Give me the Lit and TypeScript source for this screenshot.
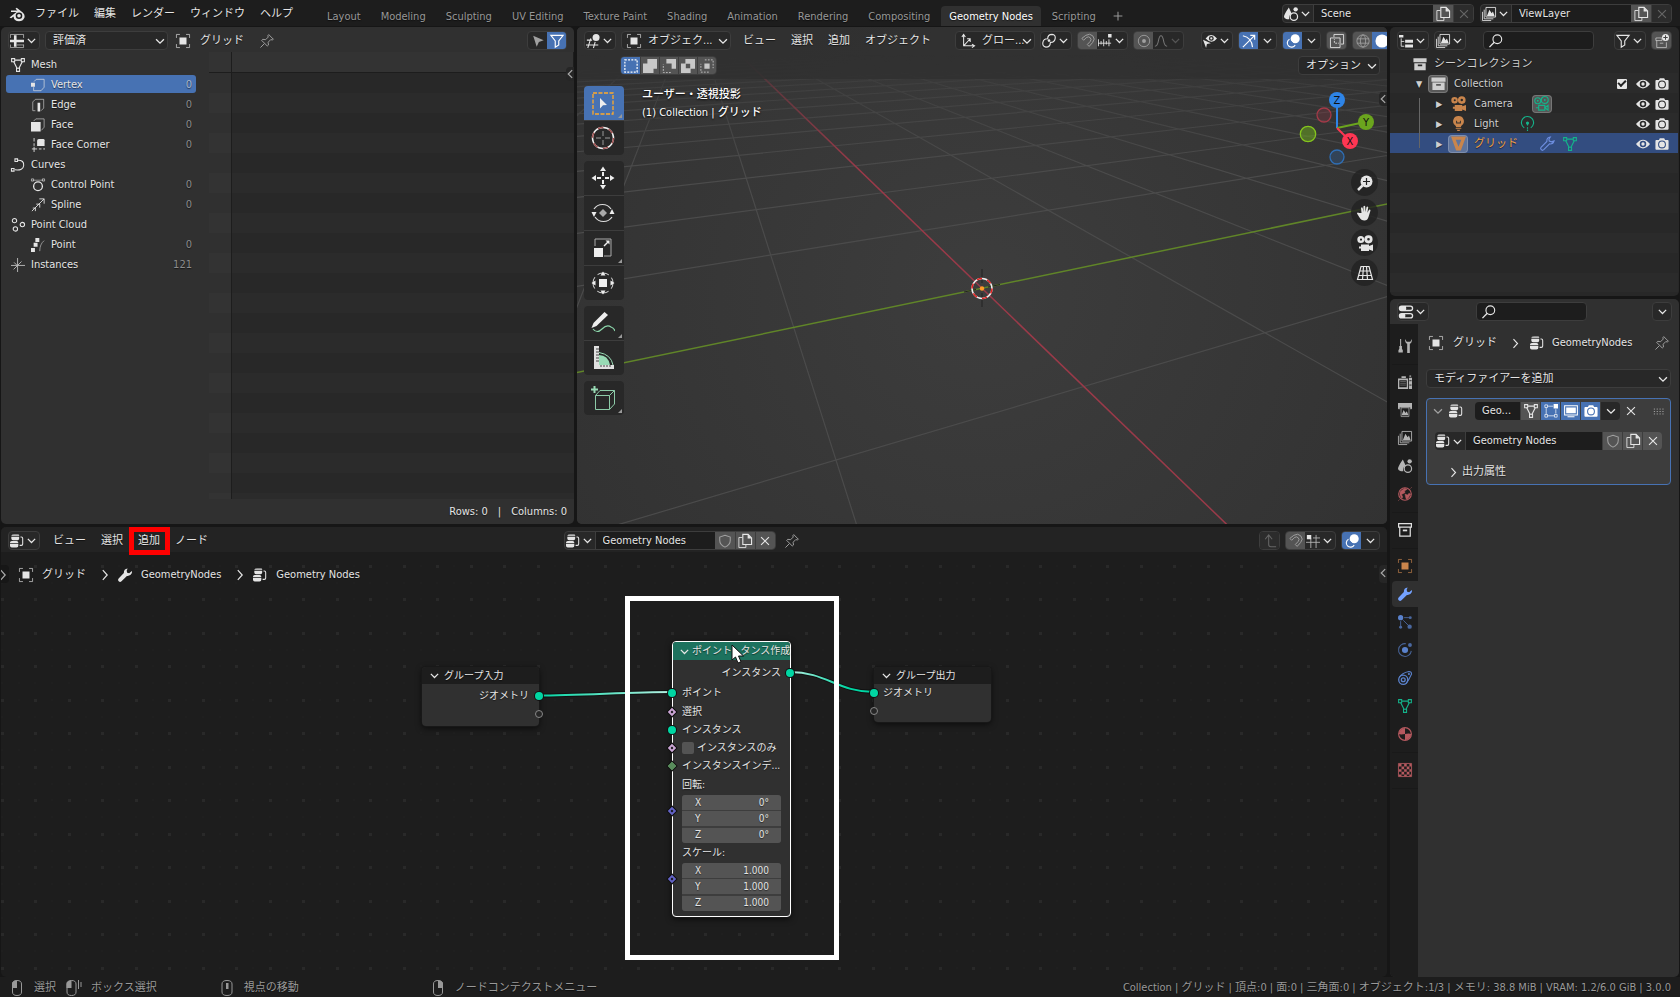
import { LitElement, html, svg, css, nothing, TemplateResult, SVGTemplateResult } from "lit";
import { customElement } from "lit/decorators.js";
import { classMap } from "lit/directives/class-map.js";

const shield = svg`<path d="M8 1.500l6 2v4c0 3.500-2.500 6-6 7.500c-3.500-1.500-6-4-6-7.500v-4z" fill="none" stroke="currentColor" stroke-width="1.200"/>`;
const nodes = svg`<path d="M4.500.500h5q1 0 1 1v.5h-9a3 1.500 0 0 1 3-1.500z M1.500 3h9v2q0 2-2 2h-5q-2 0-2-2z M0 10q0-2 2-2h5.500q2 0 2 2v.5h-9.500z M0 11.500h9.500v2q0 2-2 2h-5.500q-2 0-2-2z" fill="currentColor"/><path d="M12 3.500h1q1.500 0 1.500 1.500v6.500q0 1.500-1.500 1.500h-2" fill="none" stroke="currentColor" stroke-width="1.200"/>`;
const images = svg`<path d="M2.500 3v10.500h10.500M.5 5.500v10h10" fill="none" stroke="currentColor"/><path d="M4.500.5h11v11h-11z" fill="none" stroke="currentColor"/><path d="M5.500 10.500l3-7.500 2.500 4 1.500-2 2 5.500z" fill="currentColor"/>`;
const photo = svg`<path fill-rule="evenodd" d="M1.500 3.500h3l1-2h5l1 2h3q1 0 1 1v9q0 1-1 1h-13q-1 0-1-1v-9q0-1 1-1zM8 4a4.500 4.500 0 1 0 0 9a4.500 4.500 0 1 0 0-9zM8 5.200a3.300 3.300 0 1 1 0 6.600a3.300 3.300 0 1 1 0-6.600z" fill="currentColor"/><circle cx="8" cy="8.500" r="2" fill="none" stroke="currentColor"/>`;
const objectBox = svg`<path d="M.5 4.500v-4h4M11.500.5h4v4M15.500 11.500v4h-4M4.500 15.500h-4v-4" fill="none" stroke="currentColor" opacity=".75"/><path d="M4 4h8v8h-8z" fill="currentColor"/>`;
const meshTri = svg`<path d="M3 4l4 8M13 4l-4 8M4.500 2.500h7" fill="none" stroke="currentColor" stroke-width="1.300"/><path d="M.700.700h3.500v3.500h-3.500zM11.800.700h3.500v3.500h-3.500zM6.300 11.800h3.500v3.500h-3.500z" fill="none" stroke="currentColor" stroke-width="1.200"/>`;
const movie = svg`<path fill-rule="evenodd" d="M3.800 1a3.500 3.500 0 1 1 0 7a3.500 3.500 0 1 1 0-7zM4 3.500a1.100 1.100 0 1 0 0 2.200a1.100 1.100 0 1 0 0-2.200zM11.500.2a4.100 4.100 0 1 1 0 8.200a4.100 4.100 0 1 1 0-8.200zM11.500 3a1.300 1.300 0 1 0 0 2.600a1.300 1.300 0 1 0 0-2.600zM4 9.500h8v1.500l4-1.500v6.500l-4-1.500v1.500h-8v-2.500h-2v-2h2z" fill="currentColor"/>`;
const movieLine = svg`<g fill="none" stroke="currentColor" stroke-width="1.200"><circle cx="4" cy="5" r="3.200"/><circle cx="11.500" cy="4.200" r="3.700"/><path d="M5 10h6.500v5h-6.500zM2 12.500h3M11.500 12.500l3.500-2.500v5z"/></g><circle cx="4" cy="5" r="1" fill="currentColor"/><circle cx="11.500" cy="4.200" r="1" fill="currentColor"/>`;
const wrench = svg`<path d="M11 .500q-4.500.3-4.300 5.200l-6 6.300q-1.500 1.700.1 3.200t3.200 0l6.200-6.200q4 .5 5.500-3q.6-1.500.1-2.700l-3 2.700-2.300-.5-.6-2.500z" fill="currentColor"/>`;
const sceneIcon = svg`<path d="M5.500.500q-5.500 8-5.500 10.500a5 3.500 0 0 0 6 3q-1-5 3-6z" fill="currentColor"/><circle cx="13.300" cy="2.700" r="2.500" fill="currentColor"/><circle cx="11.300" cy="11" r="4.200" fill="none" stroke="currentColor" stroke-width="1.400"/>`;
const archive = svg`<path d="M.5 1.500h15v4.500h-15z" fill="currentColor"/><path fill-rule="evenodd" d="M1.500 7h13v8h-13zM5.500 8.500v2h5v-2z" fill="currentColor"/>`;

const ICONS: Record<string, SVGTemplateResult> = {
  nodes, images, photo, objectBox, meshTri, movie, movieLine, wrench, shield, archive, scene: sceneIcon,
  blender: svg`<path d="M.5 11.500l7-5.500h-5.500v-1.500h6.500l-2-1.700 1.200-1 6 4.700q2.600 2.300 1.700 5.300q-1.500 3.500-5.400 3.500q-5 0-5.500-4.800l-2.300 1.800z" fill="currentColor"/><circle cx="10" cy="9.800" r="3.300" fill="#1d1d1d"/><circle cx="10" cy="9.800" r="1.800" fill="currentColor"/>`,
  chevron: svg`<path d="M3.500 6l4.500 4.500 4.500-4.500" fill="none" stroke="currentColor" stroke-width="1.500"/>`,
  right: svg`<path d="M5.500 2.500l5 5.500-5 5.500" fill="none" stroke="currentColor" stroke-width="1.400"/>`,
  left: svg`<path d="M10.500 3.500l-4.500 4.500 4.500 4.500" fill="none" stroke="currentColor" stroke-width="1.400"/>`,
  close: svg`<path d="M3.500 3.500l9 9M12.500 3.500l-9 9" stroke="currentColor" stroke-width="1.300"/>`,
  plus: svg`<path d="M8 3v10M3 8h10" stroke="currentColor" stroke-width="1.200"/>`,
  copy: svg`<path d="M5 4h-4v11.500h8v-3" fill="none" stroke="currentColor"/><path d="M5.500 12v-11.500h6l4 4v7.500z" fill="none" stroke="currentColor" stroke-width="1.300"/><path d="M11 0v5h5z" fill="currentColor"/>`,
  sheet: svg`<path d="M.5 4.500v-4h15v4M.5 12v3.500h15v-3.500M8 12.500h7.500" fill="none" stroke="currentColor" opacity=".7"/><path d="M0 6.500h16v3h-16zM4.500 1.500h3v13h-3z" fill="currentColor"/>`,
  pin: svg`<path d="M10 .700l5.300 5.300-1.300.800-1.700-.4-3 3 .4 3.200-1.300 1.200-6.500-6.500 1.300-1.200 3.200.4 3-3-.4-1.600zM5 11l-4.500 4.500" fill="none" stroke="currentColor" stroke-width="1.100"/>`,
  cursor: svg`<path d="M2.500 2l12 5-5.500 2-2.500 5.500z" fill="currentColor"/>`,
  filter: svg`<path d="M1 1.500h14l-5 6.500v4.500l-4 2.500v-7z" fill="none" stroke="currentColor" stroke-width="1.300"/>`,
  vertex: svg`<path d="M3.500 4l2.500-2.500h9v9l-3.500 4h-8.500v-4" fill="none" stroke="currentColor" opacity=".75"/><path d="M0 5.500h4.500v4.500h-4.500z" fill="currentColor"/>`,
  edge: svg`<path d="M5 14.500h-3v-10l3-3h9.500v10l-3 3" fill="none" stroke="currentColor" opacity=".65"/><path d="M7.500 5.500h3v10h-3z" fill="currentColor"/>`,
  face: svg`<path d="M3 3.500l2.500-2.500h9.500v9.500l-3 3.500" fill="none" stroke="currentColor" opacity=".65"/><path d="M0 4.500h11v11h-11z" fill="currentColor"/>`,
  corner: svg`<path d="M3.500 0v4M3.500 6v3M1 12.500h6M3.500 10v6M9 12.500h3M14 12.500h2" fill="none" stroke="currentColor"/><path d="M7 9v-6q0-2 2-2h5q1.500 0 1.500 1.500v6.500z" fill="currentColor"/>`,
  curve: svg`<path d="M8 2.500q7 0 6.500 6t-10 5" fill="none" stroke="currentColor" stroke-width="1.200"/><path d="M4.500 1h3v3h-3zM.5 12h3v3h-3z" fill="none" stroke="currentColor" stroke-width="1.200"/>`,
  control: svg`<path d="M2 2.500h12" stroke="currentColor" opacity=".6"/><path d="M.5 1h2.500v2.500h-2.500zM13 1h2.500v2.500h-2.500z" fill="none" stroke="currentColor" opacity=".7"/><circle cx="8" cy="9.500" r="5" fill="none" stroke="currentColor" stroke-width="1.500"/>`,
  spline: svg`<path d="M1 15l14-14M9.500 1h5.500v5.500M2 11.500h3v3.500M6 7h4v4" fill="none" stroke="currentColor"/>`,
  cloud: svg`<g fill="none" stroke="currentColor" stroke-width="1.200"><circle cx="4" cy="3" r="2.500"/><circle cx="13" cy="7.500" r="2.500"/><circle cx="5" cy="12.500" r="2.500"/></g>`,
  point: svg`<path d="M5 0h4.500v4.500h-4.500zM3 5.500h4.500v4.500h-4.500zM0 11.500h4.500v4.500h-4.500z" fill="currentColor"/><path d="M15 3q-5 4-5 12" fill="none" stroke="currentColor" opacity=".6"/>`,
  instances: svg`<path d="M7.500 0v16M0 8.500h16M3 13l9-9M3.500 5l3 3" stroke="currentColor" opacity=".8"/>`,
  view3d: svg`<path d="M1 7h6M0 12.500h14M5.500 5l-3.500 11M10.500 9l-2 7" stroke="currentColor" fill="none" stroke-width="1.200"/><circle cx="11.500" cy="4" r="4" fill="currentColor"/>`,
  axes: svg`<path d="M3 1v12.500h12M1 3.500l2-3 2 3M12.500 11.500l3 2-3 2M3 13.500l7-7.500M7 5.500h3.500v3.500" fill="none" stroke="currentColor" stroke-width="1.200"/>`,
  pivot: svg`<path d="M7 5.500q-5-.5-6 4t3.500 5.500q5 0 5-5M9 9.500q5 .5 6-4t-3.500-5q-5 0-5 5" fill="none" stroke="currentColor" stroke-width="1.300"/><circle cx="8" cy="7.500" r="1.500" fill="currentColor"/>`,
  magnet: svg`<path d="M1 5l2 2.200 3-3q2.500-2 4.500 0t0 4.300l-3.300 3.500 2.100 2.200 4-4.500q3.500-4 .2-7.500t-8-.7z" fill="none" stroke="currentColor" stroke-width="1.100"/>`,
  increment: svg`<path d="M.5 6v8M3.500 8v4M6.500 6v8M9.500 8v4M12.500 6v8M0 10.500h15" stroke="currentColor"/><path d="M11.500 0h4v4h-4z" fill="currentColor"/>`,
  propEdit: svg`<circle cx="8" cy="8" r="6.500" fill="none" stroke="currentColor"/><circle cx="8" cy="8" r="2.200" fill="currentColor"/>`,
  falloff: svg`<path d="M1 14q3 0 4-6t3-6 3 6 4 6" fill="none" stroke="currentColor" stroke-width="1.200"/>`,
  seeSelect: svg`<path fill-rule="evenodd" d="M3 5q6-7.500 13 0q-6 7.500-13 0zM9.500 2.200a2.800 2.800 0 1 0 0 5.600a2.800 2.800 0 1 0 0-5.600z" fill="currentColor"/><path d="M0 6.500l9 4-4.500 1-1 4.500z" fill="currentColor"/><circle cx="9.500" cy="5" r="1.300" fill="currentColor"/>`,
  gizmo: svg`<path d="M1 2q10 2 11 13M1 15l13.500-13.500M9.500 1.500h5v5" fill="none" stroke="currentColor" stroke-width="1.300"/>`,
  overlays: svg`<circle cx="10.500" cy="5.500" r="5.200" fill="currentColor"/><path d="M4 6a4.800 4.800 0 1 0 6.500 6.500" fill="none" stroke="currentColor" stroke-width="1.300"/><path d="M5.500 8l3 3" stroke="#4772b3"/>`,
  xray: svg`<path d="M4.500 3.500v-3h11v11h-3M.5 4.500h11v11h-11z" fill="none" stroke="currentColor"/><path d="M5 10v-4M6 10.500h4" fill="none" stroke="currentColor" stroke-dasharray="2 1"/>`,
  wireGlobe: svg`<circle cx="8" cy="8" r="7" fill="none" stroke="currentColor"/><ellipse cx="8" cy="8" rx="3" ry="7" fill="none" stroke="currentColor"/><path d="M1 5.500h14M1 10.500h14" stroke="currentColor"/>`,
  solid: svg`<circle cx="8" cy="8" r="7.500" fill="currentColor"/>`,
  outliner: svg`<path d="M0 1h5v3h-5zM7 6.500h9v3.500h-9zM7 12h9v3.500h-9z" fill="currentColor"/><path d="M2.500 5v9h3.500M2.500 8.500h3.500" fill="none" stroke="currentColor"/>`,
  search: svg`<circle cx="9.500" cy="6" r="5" fill="none" stroke="currentColor" stroke-width="1.300"/><path d="M6 9.500l-5.500 5.500" stroke="currentColor" stroke-width="1.600"/>`,
  newColl: svg`<path d="M1 4.500h7v3h-7zM2 7.500v8h11v-6M5.500 10.500h4" fill="none" stroke="currentColor" opacity=".7"/><circle cx="12" cy="4" r="4" fill="currentColor"/><path d="M12 1.500v5M9.500 4h5" stroke="#444" stroke-width="1.200"/>`,
  bulb: svg`<path fill-rule="evenodd" d="M8 0a5.500 5.500 0 0 1 4 9.500q-1.500 1-1.500 2.500h-5q0-1.500-1.500-2.500a5.500 5.500 0 0 1 4-9.500zM5.500 5h1v2h3v-2h1v3h-5zM5 12.700h6v1h-6zM6 14.700h4l-1 1.300h-2z" fill="currentColor"/>`,
  lightData: svg`<path d="M4.500 12.500a6.500 6.500 0 1 1 7 0M8 8v2M8 12v1.500M8 14.500v1.500" fill="none" stroke="currentColor" stroke-width="1.200"/><circle cx="8" cy="7.500" r="1.700" fill="currentColor"/>`,
  meshSolid: svg`<path fill-rule="evenodd" d="M0 .5h16l-5.500 15h-5zM5 4l3 7.500 3-7.500z" fill="currentColor"/>`,
  wrenchLine: svg`<path d="M11 1q-4 .3-3.700 4.800l-6.200 6.200q-1 1.300.2 2.600t2.700 0l6.200-6.200q3.800.6 4.800-3.200l-2.800 1-2.300-.7-.4-2.200z" fill="none" stroke="currentColor" stroke-width="1.200"/>`,
  eye: svg`<path fill-rule="evenodd" d="M0 8q8-10 16 0q-8 10-16 0zM8 4.300a3.700 3.700 0 1 0 0 7.400a3.700 3.700 0 1 0 0-7.400z" fill="currentColor"/><circle cx="8" cy="8" r="1.900" fill="currentColor"/>`,
  propsEditor: svg`<path fill-rule="evenodd" d="M3 .5h10a3 3 0 0 1 0 6.500h-10a3 3 0 0 1 0-6.500zM8 2a5 5 0 0 1 0 3.500h5a1.500 1.500 0 0 0 0-3.500zM3 9h10a3 3 0 0 1 0 6.500h-10a3 3 0 0 1 0-6.500zM7 10.500a5 5 0 0 1 0 3.500h6a1.500 1.500 0 0 0 0-3.500z" fill="currentColor"/>`,
  tool: svg`<path d="M3 0v8" stroke="currentColor" stroke-width="1.200"/><path d="M1.500 8h3v3q1.500 1 1 4.500h-5q-.5-3.500 1-4.500zM8 0q0 4.500 2.500 5.500v10.500h3v-10.500q2.500-1 2.500-5.500l-2 3h-4z" fill="currentColor"/>`,
  render: svg`<path fill-rule="evenodd" d="M0 4h11.500v12h-11.500zM1.500 6v8h8.500v-8zM12.500 3h3.500v13h-3.500zM4 1.500h5v2h-5zM13 .5h2v1.500h-2z" fill="currentColor"/><path d="M13 6.500h2.500M13 11.500h2.500" stroke="#1d1d1d"/><path d="M2.500 7.500h6.500M2.500 9.500h6.500M2.500 11.500h6.500" stroke="currentColor" opacity=".5"/>`,
  output: svg`<path d="M0 0h16v6q0 1-1 1h-1v-2h-12v2h-1q-1 0-1-1z" fill="currentColor"/><path d="M3.500 5.500h9v10h-9z" fill="none" stroke="currentColor" opacity=".8"/><path d="M4 14l2.500-6 2 3.500 1.500-2 2 4.500z" fill="currentColor"/>`,
  world: svg`<circle cx="8" cy="8" r="7.200" fill="none" stroke="currentColor" stroke-width="1.300"/><path d="M2.500 5l5-3.500 3 1-3 2 .5 2-4 2 1.500 3-1 1.500q-3-3-2-8zM8 8l3 1 1.500-2 2 1-3 5-2 1-1-3zM0 16l2-2M14 2l2-2" fill="currentColor" stroke="currentColor" stroke-width=".5"/>`,
  archiveLine: svg`<path d="M.7.700h14.600v3.900h-14.600zM2 5.500v9.500h12v-9.500" fill="none" stroke="currentColor" stroke-width="1.400"/><path d="M5.500 7.500h5v2h-5z" fill="currentColor"/>`,
  particles: svg`<circle cx="3" cy="3" r="3" fill="currentColor"/><g opacity=".75"><circle cx="14" cy="3" r="1.700" fill="currentColor"/><circle cx="3" cy="14" r="1.700" fill="currentColor"/><circle cx="13.300" cy="13.300" r="2.500" fill="currentColor"/><path d="M7 3h7M3 7v7M6 6l6 6" stroke="currentColor"/></g>`,
  physics: svg`<path d="M9 .800a7.300 7.300 0 1 0 6.200 8.200" fill="none" stroke="currentColor" opacity=".7" stroke-width="1.200"/><circle cx="8" cy="8" r="3.500" fill="currentColor"/><circle cx="13.700" cy="2.300" r="2.200" fill="currentColor" opacity=".75"/>`,
  constraint: svg`<path d="M1.500 7.500q3-5.500 11-7q3 0 3 3q-3 7-6.500 11" fill="none" stroke="currentColor" stroke-width="1.200"/><circle cx="6" cy="10" r="5.200" fill="none" stroke="currentColor" stroke-width="1.500"/><circle cx="6" cy="10" r="2.200" fill="none" stroke="currentColor" stroke-width="1.500"/><circle cx="12.500" cy="3.500" r="1.200" fill="currentColor"/>`,
  material: svg`<circle cx="8" cy="8" r="7.300" fill="none" stroke="currentColor" stroke-width="1.300"/><path d="M8 1v7q-5 1-7 0a7 7 0 0 1 7-7zM8 8q5-1 7 0a7 7 0 0 1-7 7z" fill="currentColor"/>`,
  texture: svg`<path d="M.5.5h15v15h-15z" fill="none" stroke="currentColor"/><path d="M1 1h3v3h-3zM7 1h3v3h-3zM13 1h2v3h-2zM4 4h3v3h-3zM10 4h3v3h-3zM1 7h3v3h-3zM7 7h3v3h-3zM13 7h2v3h-2zM4 10h3v3h-3zM10 10h3v3h-3zM1 13h3v2h-3zM7 13h3v2h-3zM13 13h2v2h-2z" fill="currentColor"/>`,
  monitor: svg`<path d="M.700 2h14.600v10.500h-14.600z" fill="none" stroke="currentColor" stroke-width="1.200"/><path d="M2.500 4h11v6.500h-11zM4 14h8v1.200h-8z" fill="currentColor"/>`,
  editMesh: svg`<path d="M2.500 4.500v7M4.500 2.500h6M13.500 6v5M4.500 13.500h7M1 1h3v3h-3zM1 12h3v3h-3zM12 12h3v3h-3z" fill="none" stroke="currentColor" opacity=".8"/><path d="M11 0h5v5h-5z" fill="currentColor"/>`,
  drag: svg`<path d="M1 5h14M1 8h14M1 11h14" stroke="currentColor" stroke-width="1.200" stroke-dasharray="1.500 2"/>`,
  up: svg`<path d="M2.500 6l4-5 4 5M6.500 1v11q0 2.500 2.500 2.500h6" fill="none" stroke="currentColor" stroke-width="1.200"/>`,
  snapGrid: svg`<path d="M5.500 5v11M11.500 1v15M0 9.500h16M8 4.500h8" stroke="currentColor" opacity=".75"/><path d="M1 1h5v5h-5z" fill="currentColor"/>`,
  mouseL: svg`<path d="M3.500 4q0-3.500 4.500-3.500t4.500 3.500v8q0 3.500-4.500 3.500t-4.500-3.500z" fill="none" stroke="currentColor"/><path d="M3 8v-4q0-3.500 5-3.500v7.500z" fill="currentColor"/>`,
  mouseDrag: svg`<path d="M1 4q0-3.500 4.500-3.500t4.500 3.500v8q0 3.500-4.500 3.500t-4.500-3.500zM12.500 0v9M15 2v5" fill="none" stroke="currentColor"/><path d="M.5 8v-4q0-3.500 5-3.500v7.500z" fill="currentColor"/>`,
  mouseM: svg`<path d="M3 4q0-3.500 5-3.500t5 3.500v8q0 3.500-5 3.500t-5-3.500z" fill="none" stroke="currentColor"/><path d="M7 3h2.500v6h-2.500z" fill="currentColor"/>`,
  mouseR: svg`<path d="M3.500 4q0-3.500 4.500-3.500t4.500 3.500v8q0 3.500-4.500 3.500t-4.500-3.500z" fill="none" stroke="currentColor"/><path d="M13 8v-4q0-3.500-5-3.500v7.500z" fill="currentColor"/>`,
  zoom: svg`<circle cx="9.500" cy="6.500" r="6" fill="currentColor"/><path d="M5.500 10.500l-4.500 4.500" stroke="currentColor" stroke-width="2.500"/><path d="M9.500 3v7M6 6.500h7" stroke="#222" stroke-width="1.200"/>`,
  hand: svg`<path d="M4.500 8l-.5-5q1-1.500 1.700 0l.8 4-.1-5.500q1-1.500 1.800 0l.3 5.500 1-5q1.200-1 1.700.3l-.8 5.500 1.600-3q1.300-.8 1.500.7l-2 6.500q-1 3.500-4 3.500q-3.500 0-5-3l-2.500-4q.5-1.500 2-.5z" fill="currentColor"/>`,
  persp: svg`<path d="M4 1.500h8l3.500 13h-15zM3 6h10M1.500 10.500h13M6.500 1.500l-1 13M9.500 1.500l1 13" fill="none" stroke="currentColor" stroke-width="1.200"/>`,
  selNew: svg`<path d="M1 1h14v14h-14z" fill="none" stroke="currentColor" stroke-width="1.400" stroke-dasharray="2.200 1.500"/>`,
  selAdd: svg`<path d="M5 0h11v11h-4v5h-12v-11h5z" fill="currentColor"/>`,
  selSub: svg`<path d="M5 0h11v11h-5v-6h-6z" fill="currentColor"/><path d="M10 15.500h-8.500v-9.500" fill="none" stroke="currentColor" stroke-dasharray="2 1.500"/>`,
  selDiff: svg`<path fill-rule="evenodd" d="M5 0h11v11h-5v5h-11v-11h5zM5.500 5.500v5h5v-5z" fill="currentColor"/>`,
  selAnd: svg`<path d="M5.500 1h9.500v9.500M10 15h-9v-9.500" fill="none" stroke="currentColor" stroke-dasharray="2 1.500"/><path d="M5 5h6v6h-6z" fill="currentColor"/>`,
};

const TOOLS: Record<string, SVGTemplateResult> = {
  select: svg`<path d="M2 2h20v21h-20z" fill="none" stroke="#ffaa2b" stroke-width="1.300" stroke-dasharray="4 1.500"/><path d="M9 7l7 7-4 .3-3 3.200z" fill="#eee"/>`,
  cursor3d: svg`<circle cx="12" cy="12" r="10.500" fill="none" stroke="#f0f0f0" stroke-width="1.500"/><circle cx="12" cy="12" r="10.500" fill="none" stroke="#a05050" stroke-width="1.500" stroke-dasharray="5.500 5.500"/><path d="M12 5v5M12 14v5M5 12h5M14 12h5" stroke="#999"/>`,
  move: svg`<path d="M12 .5l3 4.500h-6zM12 23.500l3-4.500h-6zM.5 12l4.500-3v6zM23.500 12l-4.500-3v6z" fill="#eee"/><path d="M12 6v4M12 14v4M6 12h4M14 12h4" stroke="#eee" stroke-width="2"/>`,
  rotate: svg`<path d="M3 8a10 9.500 0 0 1 17 0M21 16a10 9.500 0 0 1-17 0" fill="none" stroke="#ddd" stroke-width="1.200"/><path d="M.5 11h5l-2.500 5zM18.500 13h5l-2.500-5z" fill="#eee"/><path d="M12 8l4 4-4 4-4-4z" fill="#aaa"/>`,
  scale: svg`<path d="M4 10v-7h16v17h-7" fill="none" stroke="#aaa"/><path d="M3 12h9v9h-9z" fill="#eee"/><path d="M13 10l4-4" stroke="#eee" stroke-width="1.500"/><path d="M14.500 4.500h4v4z" fill="#eee"/>`,
  transform: svg`<circle cx="12" cy="12" r="10" fill="none" stroke="#ddd" stroke-dasharray="12 3.700" stroke-dashoffset="6"/><path d="M8 8h8v8h-8z" fill="#eee"/><path d="M12 .5l2.500 4h-5zM12 23.500l2.500-4h-5zM.5 12l4-2.500v5zM23.500 12l-4-2.500v5z" fill="#eee"/>`,
  annotate: svg`<path d="M.500 17l2-5 11-11 3.500 3-11.500 11z" fill="#eee"/><path d="M2 18q4 5 9 0t9-2q3 1 4 4" fill="none" stroke="#8cd6ab" stroke-width="1.200"/>`,
  measure: svg`<path d="M3 0h5v19h15v4h-20z" fill="#e0e0e0"/><path d="M8 9q9 0 11 10h-11z" fill="#98dbb5"/><path d="M8 6.500q12 2 14 12.500" fill="none" stroke="#98dbb5"/><path d="M5 3h3M5 6h3M5 9h3M5 12h3M5 15h3M10 19v2M13 19v2M16 19v2M19 19v2" stroke="#444"/>`,
  addCube: svg`<path d="M4.500 9.500h14v14h-14zM4.500 9.500l4.500-5h14.500v13.500l-5 5.500M18.500 9.500l5-5" fill="none" stroke="#8ccba8"/><path d="M3.500.0v7M0 3.500h7" stroke="#98dbb5" stroke-width="2"/>`,
};

const ic = (name: string, cls = "") =>
  html`<svg class="ic ${cls}" viewBox="0 0 16 16" aria-hidden="true">${ICONS[name]}</svg>`;

/* Perspective projection of floor cell (i, j) onto the view. */
const project = (i: number, j: number) => {
  const w = 1 - 0.26 * i + 0.115 * j;
  return `${((982 - 180 * i + 279.5 * j) / w).toFixed(1)} ${((288.3 - 2.3 * i - 1.5 * j) / w).toFixed(1)}`;
};
const alongI = (j: number) => `M${project(-80, j)}L${project((0.95 + 0.115 * j) / 0.26, j)}`;
const alongJ = (i: number) => `M${project(i, (0.26 * i - 0.95) / 0.115)}L${project(i, 120)}`;
const floorPath = () => {
  let d = "";
  for (let n = -14; n <= 40; n++) if (n !== 0) d += alongI(n);
  for (let n = -30; n <= 4; n++) if (n !== 0) d += alongJ(n);
  return d;
};

interface DataItem { icon: string; label: string; count?: string; child?: boolean; active?: boolean }
const DATA: DataItem[] = [
  { icon: "meshTri", label: "Mesh" },
  { icon: "vertex", label: "Vertex", count: "0", child: true, active: true },
  { icon: "edge", label: "Edge", count: "0", child: true },
  { icon: "face", label: "Face", count: "0", child: true },
  { icon: "corner", label: "Face Corner", count: "0", child: true },
  { icon: "curve", label: "Curves" },
  { icon: "control", label: "Control Point", count: "0", child: true },
  { icon: "spline", label: "Spline", count: "0", child: true },
  { icon: "cloud", label: "Point Cloud" },
  { icon: "point", label: "Point", count: "0", child: true },
  { icon: "instances", label: "Instances", count: "121" },
];

const TABS = ["Layout", "Modeling", "Sculpting", "UV Editing", "Texture Paint", "Shading", "Animation", "Rendering", "Compositing", "Geometry Nodes", "Scripting"];

const PROP_TABS: [string, string, string][][] = [
  [["tool", "gray", "ツール"]],
  [["render", "gray", "レンダー"], ["output", "gray", "出力"], ["images", "gray", "ビューレイヤー"], ["scene", "gray", "シーン"], ["world", "red", "ワールド"]],
  [["archiveLine", "light", "コレクション"]],
  [["objectBox", "orange", "オブジェクト"], ["wrench", "blue active", "モディファイアー"], ["particles", "blue2", "パーティクル"], ["physics", "blue2", "物理演算"], ["constraint", "blue2", "コンストレイント"], ["meshTri", "green", "データ"], ["material", "red", "マテリアル"]],
  [["texture", "red", "テクスチャ"]],
];

@customElement("app-root")
export class AppRoot extends LitElement {
  static styles = css`
    :host { display: block; height: 100vh; color: #e5e5e5; background: #161616;
      font: 11px/16px "DejaVu Sans Condensed", "Noto Sans CJK JP", sans-serif; text-shadow: 0 1px 1px #0008; }
    *, *::before { box-sizing: border-box; }
    button, input, select { font: inherit; color: inherit; text-shadow: inherit; margin: 0; padding: 0; border: 0; background: none; border-radius: 0; outline: none; min-width: 0; }
    button { display: flex; align-items: center; justify-content: center; white-space: nowrap; flex: none; }
    .ic { width: 14px; height: 14px; flex: none; display: block; overflow: visible; }
    .ic.s { width: 13px; height: 13px; }
    .app { height: 100%; display: flex; flex-direction: column; overflow: hidden; }
    .spring { flex: 1; }

    .topbar { height: 26px; flex: none; display: flex; background: #1d1d1d; padding: 0 8px 0 9px; }
    .logo { width: 16px; height: 16px; margin-top: 6px; }
    .menus { display: flex; align-items: center; }
    .menus button { padding: 0 8px 0 7px; height: 18px; }
    .topbar .menus { margin-left: 3px; padding-top: 2px; }
    .tabs { display: flex; margin-left: 16px; padding-top: 6px; color: #989898; }
    .tabs button { padding: 1px 10px 0; height: 20px; border-radius: 4px 4px 0 0; }
    .tabs button.on { background: #303030; color: #fff; padding: 1px 8px 0; margin: 0 1px; }
    .tabs button.add { padding: 0 5px; }
    .ids { display: flex; gap: 6px; padding-top: 4px; }

    .group { display: flex; height: 19px; flex: none; border: 1px solid #3d3d3d; border-radius: 4px; background: #282828; overflow: hidden; }
    .group > * { height: 17px; }
    .drop { display: flex; align-items: center; justify-content: center; gap: 1px; width: 30px; }
    .idname { width: 120px; padding: 0 7px; background: #1d1d1d; border-left: 1px solid #3d3d3d; }
    .sq { width: 19px; background: #545454; }
    .sq + .sq { border-left: 1px solid #3d3d3d; }
    .idname ~ .sq { width: 20px; }
    .off { background: #2c2c2c; color: #666; }
    .on-blue { background: #4772b3; color: #fff; }
    .cell { width: 19px; }
    .half { width: 18px; }
    .dim { color: #a0a0a0; }
    .faint { color: #777; }
    .faint .s { color: #555; }

    .main { flex: 1; min-height: 0; display: flex; gap: 3px; padding: 1px 1px 0; }
    .leftcol { flex: 1; min-width: 0; display: grid; grid-template-rows: 497fr 450fr; gap: 3px; }
    .toprow { display: grid; grid-template-columns: minmax(0, 573fr) minmax(0, 810fr); gap: 3px; min-height: 0; }
    .rightcol { width: 289px; flex: none; display: grid; grid-template-rows: 269fr 678fr; gap: 3px; }
    .panel { background: #303030; border-radius: 5px; overflow: hidden; min-width: 0; min-height: 0; display: flex; flex-direction: column; position: relative; }
    .head { height: 25px; flex: none; display: flex; align-items: center; padding: 2px 7px 0; }
    .panel.properties .head { padding-top: 0; }
    .flap { position: absolute; right: 0; width: 8px; height: 14px; background: #262626; border-radius: 4px 0 0 4px; color: #aaa; }
    .flap.l { right: auto; left: 0; border-radius: 0 4px 4px 0; background: #171717; }
    .flap .ic { margin-left: -3px; }
    .flap.l .ic { margin-left: -5px; margin-top: 2px; }

    .picker { position: relative; display: flex; align-items: center; height: 19px; border: 1px solid #3d3d3d; border-radius: 4px; background: #282828; flex: none; }
    .picker select { appearance: none; width: 100%; height: 17px; padding: 0 8px 0 7px; }
    .picker > .ic:first-child { margin-left: 5px; }
    .picker .arrow { position: absolute; right: 0; pointer-events: none; }
    .picker.eval { width: 123px; margin-left: 5px; }
    .picker.mode { width: 110px; }
    .picker.orient { width: 80px; margin-right: 5px; }

    .sheet { flex: 1; min-height: 0; display: flex; }
    .path.owner { margin: 0 14px 0 5px; }
    .tree { width: 208px; flex: none; list-style: none; margin: 0; padding: 2px 13px 0 5px; }
    .tree li { height: 20px; padding: 1px 0; }
    .tree button { width: 100%; height: 18px; padding: 1px 4px 0 5px; gap: 6px; justify-content: flex-start; border-radius: 3px; }
    .tree .child { padding-left: 25px; }
    .tree .active { background: #4772b3; }
    .tree .count { margin-left: auto; color: #8c8c8c; }
    .tree .active .count { color: #a9b7cd; }
    .table { flex: 1; display: grid; grid-template: 21px 1fr / 23px 1fr; }
    .table div { border-right: 1px solid #1d1d1d; background: #333; }
    .table .h { border-bottom: 1px solid #1d1d1d; }
    .table .rows { border: 0; background: repeating-linear-gradient(#282828 0 20px, #2b2b2b 20px 40px); }
    .table .nums { background: repeating-linear-gradient(#303030 0 20px, #333 20px 40px); }
    .foot { height: 25px; flex: none; display: flex; justify-content: flex-end; align-items: center; gap: 10px; padding: 1px 7px 0 0; }

    .scene3d { position: absolute; inset: 0; width: 100%; height: 100%; }
    .view .head, .view .sub { position: relative; background: #303030cc; }
    .view .head { overflow: hidden; }
    .view .menus { margin: 0 16px 0 5px; }
    .view .head > .group { margin-right: 5px; }
    .view .head > .wide { margin-right: 17px; }
    .sub { height: 27px; flex: none; display: flex; justify-content: space-between; padding: 4px 7px 0 43px; background: #303030aa; }
    .modes .sq { color: #c8c8c8; }
    .modes .on-blue { color: #fff; }
    .options { gap: 4px; padding: 1px 0 0 7px; }
    .body3d { position: relative; flex: 1; display: flex; align-items: flex-start; gap: 18px; padding: 7px 7px; }
    .tools { display: flex; flex-direction: column; gap: 6px; }
    .toolset { display: flex; flex-direction: column; gap: 1px; border-radius: 4px; overflow: hidden; background: #3d3d3d; }
    .toolset button { width: 40px; height: 34px; background: #282828; position: relative; }
    .toolset button.on { background: #4772b3; }
    .toolset svg { width: 24px; height: 24px; margin-right: 3px; }
    .toolset .more::after { content: ""; position: absolute; right: 2px; bottom: 2px; border: 2px solid; border-color: transparent #999 #999 transparent; }
    .caption { color: #fff; text-shadow: 0 1px 2px #000; line-height: 18px; font-weight: 500; }
    .caption p { margin: 0; }
    .orbit { position: absolute; right: 10px; top: 9px; width: 80px; height: 80px; }
    .orbit text { font-size: 11px; text-anchor: middle; fill: #111; text-shadow: none; }
    .nav { position: absolute; right: 9px; top: 90px; display: flex; flex-direction: column; gap: 3px; }
    .nav button { width: 27px; height: 27px; border-radius: 50%; background: #222c; }
    .nav .ic { width: 16px; height: 16px; }
    .flap.v { top: 65px; }
    .flap.s { top: 40px; }

    .editor { background: #1d1d1d; }
    .editor .head { background: #232323; display: grid; grid-template-columns: 1fr auto 1fr; }
    .editor .part { display: flex; align-items: center; }
    .editor .menus { margin-left: 6px; }
    .mid { padding-right: 26px; gap: 9px; }
    .end { justify-content: flex-end; gap: 5px; }
    .marked { position: relative; }
    .marked::after { content: ""; position: absolute; inset: -5px -2px; border: 5px solid #f00; }
    .canvas { position: relative; flex: 1; min-height: 0; overflow: hidden; }
    .wires { position: absolute; inset: 0; width: 100%; height: 100%; }
    .crumbs { position: relative; display: flex; align-items: center; padding: 15px 0 0 18px; gap: 9px; }
    .crumbs .sep { margin: 0 -3px 0 3px; }
    .flap.c { top: 13px; height: 18px; padding-top: 1px; }

    .node { position: absolute; width: 117px; background: #303030; border-radius: 4px; font-size: 10px; line-height: 16px; box-shadow: 0 0 0 1px #181818, 0 2px 6px #000a; }
    .node header { height: 17px; display: flex; align-items: center; background: #1d1d1d; border-radius: 4px 4px 0 0; padding-left: 6px; gap: 3px; white-space: nowrap; }
    .node .body { padding: 3px 10px; }
    .row { position: relative; height: 18px; display: flex; align-items: center; white-space: nowrap; }
    .row.tall { height: 20px; }
    .row.out { justify-content: flex-end; }
    .sock { position: absolute; left: -14px; top: 50%; width: 8px; height: 8px; margin-top: -4px; border-radius: 50%; background: #00d6a3; box-shadow: 0 0 0 1px #111; }
    .out .sock { left: auto; right: -14px; }
    .sock.empty { background: #262626; border: 1px solid #888; box-shadow: none; }
    .sock.dia { width: 6px; height: 6px; margin: -3px 0 0 1px; border-radius: 0; transform: rotate(45deg); background: #111; border: 2px solid #cca6d6; box-shadow: 0 0 0 1px #111; }
    .sock.int { background: #598c5c; border-color: #598c5c; }
    .sock.vec { border-color: #6363c7; top: 16px; }
    .n-in { left: 421px; top: 115px; }
    .n-out { left: 873px; top: 115px; }
    .n-out .body { padding: 0 9px 2px; }
    .n-out .sock { left: -13px; }
    .n-main { left: 671px; top: 89px; width: 119px; border: 1px solid #fff; }
    .n-main header { height: 18px; background: #1d725e; border-radius: 3px 3px 0 0; padding-left: 5px; gap: 1px; }
    .n-main .body { padding: 3px 9px 5px; }
    .n-main .out .sock { right: -13px; }
    .check { display: flex; align-items: center; gap: 3px; }
    .check input { appearance: none; width: 12px; height: 12px; background: #545454; border-radius: 2px; }
    .vecs { position: relative; display: grid; gap: 1px; background: #3d3d3d; border-radius: 3px; height: 48px; }
    .vecs label { display: flex; background: #545454; padding: 0 12px 0 13px; height: 15px; align-items: center; }
    .vecs label:first-of-type { border-radius: 3px 3px 0 0; }
    .vecs label:last-of-type { border-radius: 0 0 3px 3px; }
    .vecs input { flex: 1; width: 20px; text-align: right; }
    .frame { position: absolute; left: 624px; top: 44px; width: 214px; height: 364px; border: 5px solid #fff; }
    .pointer { position: absolute; left: 730px; top: 92px; width: 14px; height: 20px; }

    .outliner { background: #282828; }
    .outliner .head { gap: 5px; }
    .search { display: flex; align-items: center; width: 111px; height: 19px; background: #1d1d1d; border: 1px solid #3d3d3d; border-radius: 4px; padding-left: 5px; gap: 4px; margin-right: 4px; flex: none; }
    .properties .search { margin-right: 18px; }
    .search input { width: 80px; }
    .orow { height: 20px; display: flex; align-items: center; padding: 1px 9px 0 23px; gap: 6px; color: #cfcfcf; }
    .olist { flex: 1; margin: 1px 1px 4px 0; background: repeating-linear-gradient(#282828 0 20px, #2b2b2b 20px 40px); position: relative; }
    .olist::before { content: ""; position: absolute; left: 29px; top: 45px; height: 50px; border-left: 1px solid #666; }
    .orow > .ic + .name { margin-left: 1px; }
    .orow.l1 { padding-left: 23px; }
    .orow.l2 { padding-left: 43px; }
    .orow.sel { background: #334d80; }
    .orow .name { margin-right: 13px; }
    .chip { width: 20px; height: 18px; display: grid; place-items: center; border-radius: 4px; flex: none; }
    .chip .ic { width: 15px; height: 15px; }
    .chip.box { background: #ffffff38; box-shadow: inset 0 0 0 1px #ffffff30; }
    .tri { width: 12px; font-size: 9px; line-height: 12px; text-align: center; margin-right: -3px; }
    .vis { display: flex; gap: 5px; margin-left: auto; color: #e5e5e5; align-items: center; }
    .vis button { height: 16px; }
    .vis input { appearance: none; width: 10px; height: 10px; margin-right: 4px; background: #e5e5e5; border-radius: 1px; display: grid; place-items: center; }
    .vis input::after { content: ""; width: 6px; height: 3px; margin-top: -2px; border: solid #222; border-width: 0 0 2px 2px; transform: rotate(-45deg); }
    .orange { color: #c9854c; }
    .green { color: #14b38a; }
    .amber { color: #f0a040; }
    .periwinkle { color: #6f8fe0; }

    .props { flex: 1; display: flex; min-height: 0; }
    .ptabs { width: 28px; flex: none; background: #1d1d1d; padding: 9px 0 0 2px; }
    .ptabs div { display: flex; flex-direction: column; gap: 2px; padding-bottom: 5px; margin-bottom: 4px; border-bottom: 1px solid #191919; }
    .ptabs button { height: 26px; width: 26px; border-radius: 4px 0 0 4px; }
    .ptabs .active { background: #303030; }
    .gray { color: #b4b4b4; } .light { color: #e0e0e0; } .red { color: #b5595f; } .blue { color: #74a2ff; } .blue2 { color: #5a82cc; }
    .pbody { flex: 1; min-width: 0; padding: 9px 8px 0 8px; }
    .path { display: flex; align-items: center; height: 20px; padding: 0 2px 0 3px; gap: 10px; }
    .path .ic.s { margin: 0 -2px 0 2px; }
    .path .ic.s + .ic { margin-right: -2px; }
    .pbody .picker { margin-top: 16px; }
    .modifier { margin-top: 10px; border: 1px solid #4772b3; border-radius: 4px; background: #3d3d3d; height: 87px; }
    .mrow { display: flex; align-items: center; height: 18px; margin: 3px 4px 0 4px; }
    .mrow .kind { margin: 0 12px 0 4px; }
    .mrow .del { margin-left: 4px; }
    .mrow.two { margin: 12px 8px 0 8px; }
    .bar { display: flex; height: 18px; border-radius: 4px; overflow: hidden; gap: 1px; }
    .bar input { background: #1d1d1d; padding: 0 7px; width: 45px; }
    .bar button { height: 18px; width: 19px; background: #545454; }
    .bar .on-blue { background: #4772b3; }
    .bar .dark { background: #282828; }
    .bar.full { flex: 1; }
    .bar.full input { flex: 1; width: 60px; }
    .bar.full .drop { width: 30px; }
    .subpanel { margin: 14px 0 0 20px; gap: 2px; }

    .status { height: 20px; flex: none; display: flex; align-items: center; background: #1d1d1d; color: #999; padding: 1px 9px 0 9px; white-space: nowrap; }
    .status span { display: flex; align-items: center; gap: 9px; }
    .status .ic { width: 16px; height: 16px; }
    .status .a { margin-right: 10px; } .status .b { margin-right: 62px; } .status .c { margin-right: 131px; }
  `;

  private copyClose(closeOff = false): TemplateResult {
    return html`<button class="sq" aria-label="複製">${ic("copy")}</button>
      <button class=${classMap({ sq: true, off: closeOff })} aria-label="削除">${ic("close")}</button>`;
  }

  private drop(icon: string, cls = "") {
    return html`<button class="drop ${cls}" aria-label=${icon}>${ic(icon)}${ic("chevron", "s")}</button>`;
  }

  private topbar() {
    return html`<header class="topbar">
      <svg class="logo" viewBox="0 0 16 16">${ICONS.blender}</svg>
      <nav class="menus">${["ファイル", "編集", "レンダー", "ウィンドウ", "ヘルプ"].map((m) => html`<button>${m}</button>`)}</nav>
      <nav class="tabs">${TABS.map((t) => html`<button class=${classMap({ on: t === "Geometry Nodes" })}>${t}</button>`)}
        <button class="add" aria-label="追加">${ic("plus")}</button></nav>
      <div class="spring"></div>
      <div class="ids">
        <div class="group">${this.drop("scene")}<input class="idname" aria-label="シーン" value="Scene">${this.copyClose(true)}</div>
        <div class="group">${this.drop("images")}<input class="idname" aria-label="ビューレイヤー" value="ViewLayer">${this.copyClose(true)}</div>
      </div>
    </header>`;
  }

  private spreadsheet() {
    return html`<section class="panel">
      <div class="head">
        <div class="group">${this.drop("sheet")}</div>
        <div class="picker eval"><select aria-label="評価状態"><option>評価済</option></select>${ic("chevron", "arrow")}</div>
        <div class="path owner">${ic("objectBox")}<span>グリッド</span></div>
        ${ic("pin", "dim")}
        <div class="spring"></div>
        <div class="group"><button class="cell dim" aria-label="選択のみ">${ic("cursor")}</button><button class="cell on-blue" aria-label="フィルター">${ic("filter")}</button></div>
      </div>
      <div class="sheet">
        <ul class="tree">${DATA.map((d) => html`<li><button class=${classMap({ child: !!d.child, active: !!d.active })}>
          ${ic(d.icon)}<span>${d.label}</span>${d.count ? html`<span class="count">${d.count}</span>` : nothing}</button></li>`)}</ul>
        <div class="table"><div class="h"></div><div class="h"></div><div class="nums"></div><div class="rows"></div></div>
      </div>
      <footer class="foot"><span>Rows: 0</span><span>|</span><span>Columns: 0</span></footer>
      <div class="flap s">${ic("left")}</div>
    </section>`;
  }

  private viewport() {
    const tool = (n: string, cls = "") => html`<button class=${cls} aria-label=${n}><svg viewBox="0 0 24 24">${TOOLS[n]}</svg></button>`;
    return html`<section class="panel view">
      <svg class="scene3d" viewBox="577 27 810 497" preserveAspectRatio="xMidYMid slice">
        <defs>
          <radialGradient id="bg" gradientUnits="userSpaceOnUse" cx="982" cy="290" r="480"><stop offset="0" stop-color="#3d3d3d"/><stop offset="1" stop-color="#323232"/></radialGradient>
          <linearGradient id="fade" gradientUnits="userSpaceOnUse" x1="0" y1="55" x2="0" y2="170"><stop offset="0" stop-color="#fff" stop-opacity="0"/><stop offset=".3" stop-color="#fff" stop-opacity=".45"/><stop offset="1" stop-color="#fff"/></linearGradient>
          <mask id="m" maskUnits="userSpaceOnUse" x="577" y="27" width="810" height="497"><rect x="577" y="27" width="810" height="497" fill="url(#fade)"/></mask>
        </defs>
        <rect x="0" y="0" width="1800" height="900" fill="url(#bg)"/>
        <g mask="url(#m)" fill="none">
          <path d=${floorPath()} stroke="#4b4b4b" stroke-width="1.200"/>
          <path d=${alongI(0)} stroke="#9a3a49" stroke-width="1.500"/>
          <path d=${alongJ(0)} stroke="#608528" stroke-width="1.500"/>
        </g>
        <path d="M982 269v14M982 293v14M964 292l12-2.500M988 287l12-2.500" stroke="#222"/>
        <circle cx="982" cy="288.500" r="10" fill="none" stroke="#eee" stroke-width="1.500"/>
        <circle cx="982" cy="288.500" r="10" fill="none" stroke="#e02020" stroke-width="1.500" stroke-dasharray="5.200 5.200"/>
        <circle cx="982" cy="288.500" r="2.200" fill="#ff9a26"/>
      </svg>
      <div class="head">
        <div class="group">${this.drop("view3d")}</div>
        <div class="picker mode">${ic("objectBox")}<select aria-label="モード"><option>オブジェク...</option></select>${ic("chevron", "arrow")}</div>
        <nav class="menus">${["ビュー", "選択", "追加", "オブジェクト"].map((m) => html`<button>${m}</button>`)}</nav>
        <div class="picker orient">${ic("axes")}<select aria-label="座標系"><option>グロー...</option></select>${ic("chevron", "arrow")}</div>
        <div class="group">${this.drop("pivot")}</div>
        <div class="group"><button class="sq dim" aria-label="スナップ">${ic("magnet")}</button>${this.drop("increment")}</div>
        <div class="group wide"><button class="sq dim" aria-label="プロポーショナル編集">${ic("propEdit")}</button>${this.drop("falloff", "faint")}</div>
        <div class="group">${this.drop("seeSelect")}</div>
        <div class="group"><button class="cell on-blue" aria-label="ギズモ">${ic("gizmo")}</button><button class="half" aria-label="ギズモ設定">${ic("chevron", "s")}</button></div>
        <div class="group"><button class="cell on-blue" aria-label="オーバーレイ">${ic("overlays")}</button><button class="half" aria-label="オーバーレイ設定">${ic("chevron", "s")}</button></div>
        <div class="group"><button class="sq" aria-label="透過表示">${ic("xray")}</button></div>
        <div class="group"><button class="sq dim" aria-label="ワイヤーフレーム">${ic("wireGlobe")}</button><button class="cell on-blue" aria-label="ソリッド">${ic("solid")}</button></div>
      </div>
      <div class="sub">
        <div class="group modes">${["selNew", "selAdd", "selSub", "selDiff", "selAnd"].map((n, i) => html`<button class=${classMap({ sq: true, "on-blue": i === 0 })} aria-label=${n}>${ic(n)}</button>`)}</div>
        <div class="group"><button class="options">オプション${ic("chevron")}</button></div>
      </div>
      <div class="body3d">
        <div class="tools">
          <div class="toolset">${tool("select", "on more")}${tool("cursor3d")}</div>
          <div class="toolset">${tool("move")}${tool("rotate")}${tool("scale", "more")}${tool("transform")}</div>
          <div class="toolset">${tool("annotate", "more")}${tool("measure")}</div>
          <div class="toolset">${tool("addCube", "more")}</div>
        </div>
        <div class="caption"><p>ユーザー・透視投影</p><p>(1) Collection | グリッド</p></div>
        <svg class="orbit" viewBox="0 0 80 80">
          <path d="M40 40v-28" stroke="#2e84e6" stroke-width="2"/><path d="M40 40l28-6" stroke="#6ba51e" stroke-width="2"/><path d="M40 40l12 12" stroke="#ff3653" stroke-width="2"/>
          <circle cx="27" cy="27" r="7" fill="#ff365322" stroke="#a33a48" stroke-width="1.300"/>
          <circle cx="11" cy="46" r="7.700" fill="#6ba51e88" stroke="#84c41e" stroke-width="1.300"/>
          <circle cx="40" cy="69" r="7" fill="#2e84e633" stroke="#2e6eb5" stroke-width="1.300"/>
          <circle cx="40" cy="12" r="8" fill="#2e84e6"/><circle cx="69" cy="34" r="8" fill="#6ba51e"/><circle cx="53" cy="53" r="8" fill="#ff3653"/>
          <text x="40" y="16">Z</text><text x="69" y="38">Y</text><text x="53" y="57">X</text>
        </svg>
        <div class="nav">${["zoom", "hand", "movie", "persp"].map((n) => html`<button aria-label=${n}>${ic(n)}</button>`)}</div>
      </div>
      <div class="flap v">${ic("left")}</div>
    </section>`;
  }

  private vector(values: string[]) {
    return html`<div class="vecs"><i class="sock dia vec"></i>${["X", "Y", "Z"].map((a, i) => html`<label>${a}<input value=${values[i]}></label>`)}</div>`;
  }

  private nodeEditor() {
    return html`<section class="panel editor">
      <div class="head">
        <div class="part">
          <div class="group">${this.drop("nodes")}</div>
          <nav class="menus"><button>ビュー</button><button>選択</button><button class="marked">追加</button><button>ノード</button></nav>
        </div>
        <div class="part mid">
          <div class="group">${this.drop("nodes")}<input class="idname" aria-label="ノードツリー" value="Geometry Nodes">
            <button class="sq dim" aria-label="フェイクユーザー">${ic("shield")}</button>${this.copyClose()}</div>
          ${ic("pin", "dim")}
        </div>
        <div class="part end">
          <div class="group"><button class="sq off" aria-label="親ノードツリー">${ic("up")}</button></div>
          <div class="group"><button class="sq dim" aria-label="スナップ">${ic("magnet")}</button>${this.drop("snapGrid")}</div>
          <div class="group"><button class="cell on-blue" aria-label="オーバーレイ">${ic("overlays")}</button><button class="half" aria-label="オーバーレイ設定">${ic("chevron", "s")}</button></div>
        </div>
      </div>
      <div class="canvas">
        <svg class="wires">
          <defs>
            <pattern id="dots" width="67" height="67" patternUnits="userSpaceOnUse" x="0" y="13">
              <path d="M0 0h3v3h-3zM33 0h3v3h-3zM0 33h3v3h-3zM33 33h3v3h-3z" fill="#292929"/>
              <path d="M17 0h2v2h-2zM50 0h2v2h-2zM17 17h2v2h-2zM50 17h2v2h-2zM0 17h2v2h-2zM33 17h2v2h-2zM17 33h2v2h-2zM50 33h2v2h-2zM0 50h2v2h-2zM33 50h2v2h-2zM17 50h2v2h-2zM50 50h2v2h-2z" fill="#1f1f1f"/>
            </pattern>
            <linearGradient id="w1" gradientUnits="userSpaceOnUse" x1="537" y1="0" x2="671" y2="0"><stop offset="0" stop-color="#00d6a3"/><stop offset="1" stop-color="#b8f0e2"/></linearGradient>
            <linearGradient id="w2" gradientUnits="userSpaceOnUse" x1="789" y1="0" x2="872" y2="0"><stop offset="0" stop-color="#b8f0e2"/><stop offset=".7" stop-color="#00d6a3"/></linearGradient>
          </defs>
          <rect width="100%" height="100%" fill="url(#dots)"/>
          <path d="M537 143.500C580 143.500 628 140 671 140" fill="none" stroke="#111" stroke-width="4"/>
          <path d="M537 143.500C580 143.500 628 140 671 140" fill="none" stroke="url(#w1)" stroke-width="2"/>
          <path d="M789 120C825 120 837 140 873 140" fill="none" stroke="#111" stroke-width="4"/>
          <path d="M789 120C825 120 837 140 873 140" fill="none" stroke="url(#w2)" stroke-width="2"/>
        </svg>
        <div class="crumbs">${ic("objectBox")}<span>グリッド</span>${ic("right", "sep")}${ic("wrench")}<span>GeometryNodes</span>${ic("right", "sep")}${ic("nodes")}<span>Geometry Nodes</span></div>
        <article class="node n-in">
          <header>${ic("chevron", "s")}グループ入力</header>
          <div class="body"><div class="row out">ジオメトリ<i class="sock"></i></div><div class="row out"><i class="sock empty"></i></div></div>
        </article>
        <article class="node n-main">
          <header>${ic("chevron", "s")}ポイント...タンス作成</header>
          <div class="body">
            <div class="row out tall">インスタンス<i class="sock"></i></div>
            <div class="row tall"><i class="sock"></i>ポイント</div>
            <div class="row"><i class="sock dia"></i>選択</div>
            <div class="row"><i class="sock"></i>インスタンス</div>
            <div class="row"><i class="sock dia"></i><label class="check"><input type="checkbox">インスタンスのみ</label></div>
            <div class="row"><i class="sock dia int"></i>インスタンスインデ...</div>
            <div class="row tall">回転:</div>
            ${this.vector(["0°", "0°", "0°"])}
            <div class="row tall">スケール:</div>
            ${this.vector(["1.000", "1.000", "1.000"])}
          </div>
        </article>
        <article class="node n-out">
          <header>${ic("chevron", "s")}グループ出力</header>
          <div class="body"><div class="row"><i class="sock"></i>ジオメトリ</div><div class="row"><i class="sock empty"></i></div></div>
        </article>
        <div class="frame"></div>
        <svg class="pointer" viewBox="0 0 14 20"><path d="M1 1v15l3.500-3 2.500 6 3-1.300-2.500-5.700h5z" fill="#fff" stroke="#111"/></svg>
        <div class="flap c l">${ic("right")}</div>
        <div class="flap c">${ic("left")}</div>
      </div>
    </section>`;
  }

  private vis(check = false) {
    return html`<div class="vis">${check ? html`<input type="checkbox" checked aria-label="有効">` : nothing}
      <button aria-label="表示">${ic("eye")}</button><button aria-label="レンダー">${ic("photo")}</button></div>`;
  }

  private outliner() {
    return html`<section class="panel outliner">
      <div class="head">
        <div class="group">${this.drop("outliner")}</div><div class="group">${this.drop("images")}</div>
        <div class="spring"></div>
        <label class="search">${ic("search")}<input type="text" aria-label="検索"></label>
        <div class="spring"></div>
        <div class="group">${this.drop("filter")}</div>
        <div class="group"><button class="sq" aria-label="新規コレクション">${ic("newColl")}</button></div>
      </div>
      <div class="olist">
        <div class="orow">${ic("archive")}<span class="name">シーンコレクション</span></div>
        <div class="orow l1"><span class="tri">▼</span><span class="chip box">${ic("archive")}</span><span class="name">Collection</span>${this.vis(true)}</div>
        <div class="orow l2"><span class="tri">▶</span><span class="chip orange">${ic("movie")}</span><span class="name">Camera</span><span class="chip box green">${ic("movieLine")}</span>${this.vis()}</div>
        <div class="orow l2"><span class="tri">▶</span><span class="chip orange">${ic("bulb")}</span><span class="name">Light</span><span class="chip green">${ic("lightData")}</span>${this.vis()}</div>
        <div class="orow l2 sel"><span class="tri">▶</span><span class="chip box orange">${ic("meshSolid")}</span><span class="name amber">グリッド</span><span class="chip periwinkle">${ic("wrenchLine")}</span><span class="green">${ic("meshTri")}</span>${this.vis()}</div>
      </div>
    </section>`;
  }

  private properties() {
    return html`<section class="panel properties">
      <div class="head">
        <div class="group">${this.drop("propsEditor")}</div>
        <div class="spring"></div>
        <label class="search">${ic("search")}<input type="text" aria-label="検索"></label>
        <div class="spring"></div>
        <div class="group"><button class="half" aria-label="オプション">${ic("chevron", "s")}</button></div>
      </div>
      <div class="props">
        <nav class="ptabs">${PROP_TABS.map((g) => html`<div>${g.map(([n, c, t]) => html`<button class=${c} aria-label=${t}>${ic(n)}</button>`)}</div>`)}</nav>
        <div class="pbody">
          <div class="path">${ic("objectBox")}<span>グリッド</span>${ic("right", "s")}${ic("nodes")}<span>GeometryNodes</span><div class="spring"></div>${ic("pin", "dim")}</div>
          <div class="picker"><select aria-label="モディファイアー"><option>モディファイアーを追加</option></select>${ic("chevron", "arrow")}</div>
          <div class="modifier">
            <div class="mrow">
              ${ic("chevron", "dim")}<span class="kind">${ic("nodes")}</span>
              <div class="bar"><input aria-label="名前" value="Geo...">
                <button aria-label="ケージで表示">${ic("meshTri")}</button><button class="on-blue" aria-label="編集モード">${ic("editMesh")}</button><button class="on-blue" aria-label="リアルタイム">${ic("monitor")}</button><button class="on-blue" aria-label="レンダー">${ic("photo")}</button><button class="dark" aria-label="詳細">${ic("chevron")}</button></div>
              <button class="del" aria-label="削除">${ic("close")}</button><div class="spring"></div>${ic("drag", "s dim")}
            </div>
            <div class="mrow two"><div class="bar full">
              <button class="drop dark" aria-label="ノードツリー">${ic("nodes")}${ic("chevron", "s")}</button><input aria-label="ノードグループ" value="Geometry Nodes">
              <button class="dim" aria-label="フェイクユーザー">${ic("shield")}</button><button aria-label="複製">${ic("copy")}</button><button aria-label="解除">${ic("close")}</button></div></div>
            <button class="subpanel">${ic("right", "s")}出力属性</button>
          </div>
        </div>
      </div>
    </section>`;
  }

  render() {
    return html`<div class="app">
      ${this.topbar()}
      <main class="main">
        <div class="leftcol"><div class="toprow">${this.spreadsheet()}${this.viewport()}</div>${this.nodeEditor()}</div>
        <div class="rightcol">${this.outliner()}${this.properties()}</div>
      </main>
      <footer class="status">
        <span class="a">${ic("mouseL")}選択</span><span class="b">${ic("mouseDrag")}ボックス選択</span><span class="c">${ic("mouseM")}視点の移動</span><span>${ic("mouseR")}ノードコンテクストメニュー</span>
        <div class="spring"></div>
        <div>Collection | グリッド | 頂点:0 | 面:0 | 三角面:0 | オブジェクト:1/3 | メモリ: 38.8 MiB | VRAM: 1.2/6.0 GiB | 3.0.0</div>
      </footer>
    </div>`;
  }
}
